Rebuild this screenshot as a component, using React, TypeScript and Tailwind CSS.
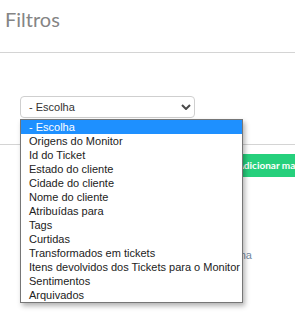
const options = [
  '- Escolha',
  'Origens do Monitor',
  'Id do Ticket',
  'Estado do cliente',
  'Cidade do cliente',
  'Nome do cliente',
  'Atribuídas para',
  'Tags',
  'Curtidas',
  'Transformados em tickets',
  'Itens devolvidos dos Tickets para o Monitor',
  'Sentimentos',
  'Arquivados',
];

function FakeSelect() {
  return (
    <div className="relative w-[175px]">
      <div className="flex h-[22px] items-center justify-between rounded-[4px] border border-[#cfcfcf] bg-white pl-[8px] pr-[2px] text-[11px] text-[#333]">
        <span>- Escolha</span>
        <svg width="10" height="6" viewBox="0 0 10 6" className="mr-[1px]">
          <polyline points="1,1 5,5 9,1" fill="none" stroke="#4a4a4a" strokeWidth="2" />
        </svg>
      </div>

      {/* open options list */}
      <ul className="absolute left-0 top-[23px] z-10 w-[223px] border border-[#767676] bg-white shadow-[2px_3px_5px_rgba(0,0,0,0.3)]">
        {options.map((opt, i) => (
          <li
            key={opt}
            className={
              i === 0
                ? 'h-[14px] whitespace-nowrap bg-[#1e90ff] pl-[8px] text-[11px] leading-[14px] text-white'
                : 'h-[14px] whitespace-nowrap pl-[8px] text-[11px] leading-[14px] text-[#222]'
            }
          >
            {opt}
          </li>
        ))}
      </ul>
    </div>
  );
}

export default function App() {
  return (
    <div className="relative h-[320px] w-[295px] overflow-hidden bg-white font-['Liberation_Sans',Arial,sans-serif]">
      <div className="h-[53px] border-b border-[#d4d4d4] pl-[5px] pt-[5px]">
        <h1 className="font-['Lato',sans-serif] text-[20px] leading-[28px] text-[#858585]">Filtros</h1>
      </div>

      <div className="pl-[20px] pt-[43px]">
        <FakeSelect />
      </div>

      <div className="mt-[26px] border-b border-[#d4d4d4]" />

      <div className="mt-[9px] flex">
        <button className="ml-[230px] h-[23px] whitespace-nowrap bg-[#26d07c] px-[7px] font-['Lato',sans-serif] text-[10px] font-bold text-white">
          Adicionar mais
        </button>
      </div>

      <div className="mt-[71px] ml-[20px] w-[232px] text-right text-[11px] leading-[14px] text-[#7489a3]">
        Nenhuma
      </div>
    </div>
  );
}
